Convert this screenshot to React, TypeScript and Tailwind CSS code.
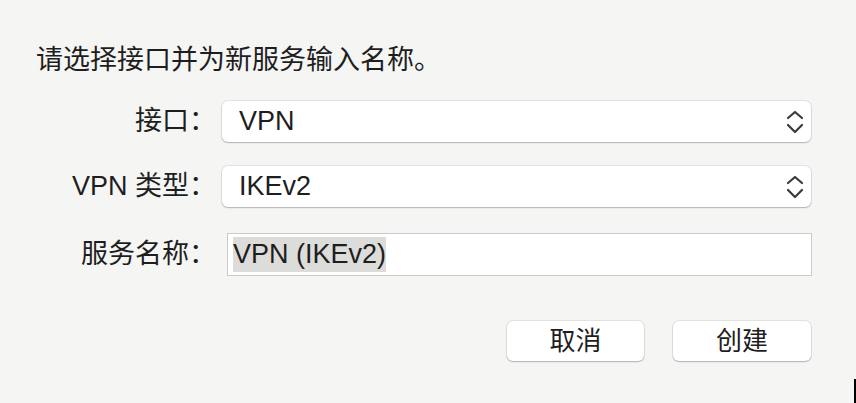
const font = { fontFamily: '"Liberation Sans", "Noto Sans CJK SC", sans-serif' };

const Chevrons = () => (
  <svg width="18" height="26" viewBox="0 0 18 26" fill="none" stroke="#3a3a3a" strokeWidth="2.2" strokeLinecap="round" strokeLinejoin="round">
    <path d="M2 9 L9 3 L16 9" />
    <path d="M2 16 L9 23 L16 16" />
  </svg>
);

const Select = ({ value }: { value: string }) => (
  <div className="flex h-[41px] w-[589px] items-center justify-between rounded-[6px] bg-white pl-[17px] pr-[7px] shadow-[0_1px_1.5px_rgba(0,0,0,0.22),0_0_0_1px_rgba(0,0,0,0.07)]">
    <span className="leading-none">{value}</span>
    <Chevrons />
  </div>
);

const Row = ({ label, children }: { label: string; children: React.ReactNode }) => (
  <div className="flex items-center gap-[6px]">
    <div className="w-[216px] text-right leading-none">{label}</div>
    {children}
  </div>
);

export default function App() {
  return (
    <div className="relative h-[403px] w-[856px] overflow-hidden bg-[#f5f5f4] text-[27px] text-[#1e1e1e]" style={font}>
      <div className="pl-[36px] pt-[42px] leading-[36px]">请选择接口并为新服务输入名称。</div>

      <div className="mt-[23px] flex flex-col">
        <Row label="接口：">
          <Select value="VPN" />
        </Row>
        <div className="mt-[24px]">
          <Row label="VPN 类型：">
            <Select value="IKEv2" />
          </Row>
        </div>
        <div className="mt-[26px]">
          <Row label="服务名称：">
            <div className="ml-[5px] flex h-[43px] w-[585px] items-center border border-[#cbcbcb] bg-white pl-[5px]">
              <span className="bg-[#dcdcda] leading-[35px]">VPN (IKEv2)</span>
            </div>
          </Row>
        </div>
      </div>

      <div className="mt-[45px] flex justify-end gap-[29px] pr-[45px] text-[26px]">
        <button className="h-[40px] w-[137px] rounded-[6px] bg-white leading-none shadow-[0_1px_1.5px_rgba(0,0,0,0.22),0_0_0_1px_rgba(0,0,0,0.07)]">取消</button>
        <button className="h-[40px] w-[138px] rounded-[6px] bg-white leading-none shadow-[0_1px_1.5px_rgba(0,0,0,0.22),0_0_0_1px_rgba(0,0,0,0.07)]">创建</button>
      </div>

      <div className="absolute left-[854px] top-[379px] h-[24px] w-[2px] bg-black" />
    </div>
  );
}
